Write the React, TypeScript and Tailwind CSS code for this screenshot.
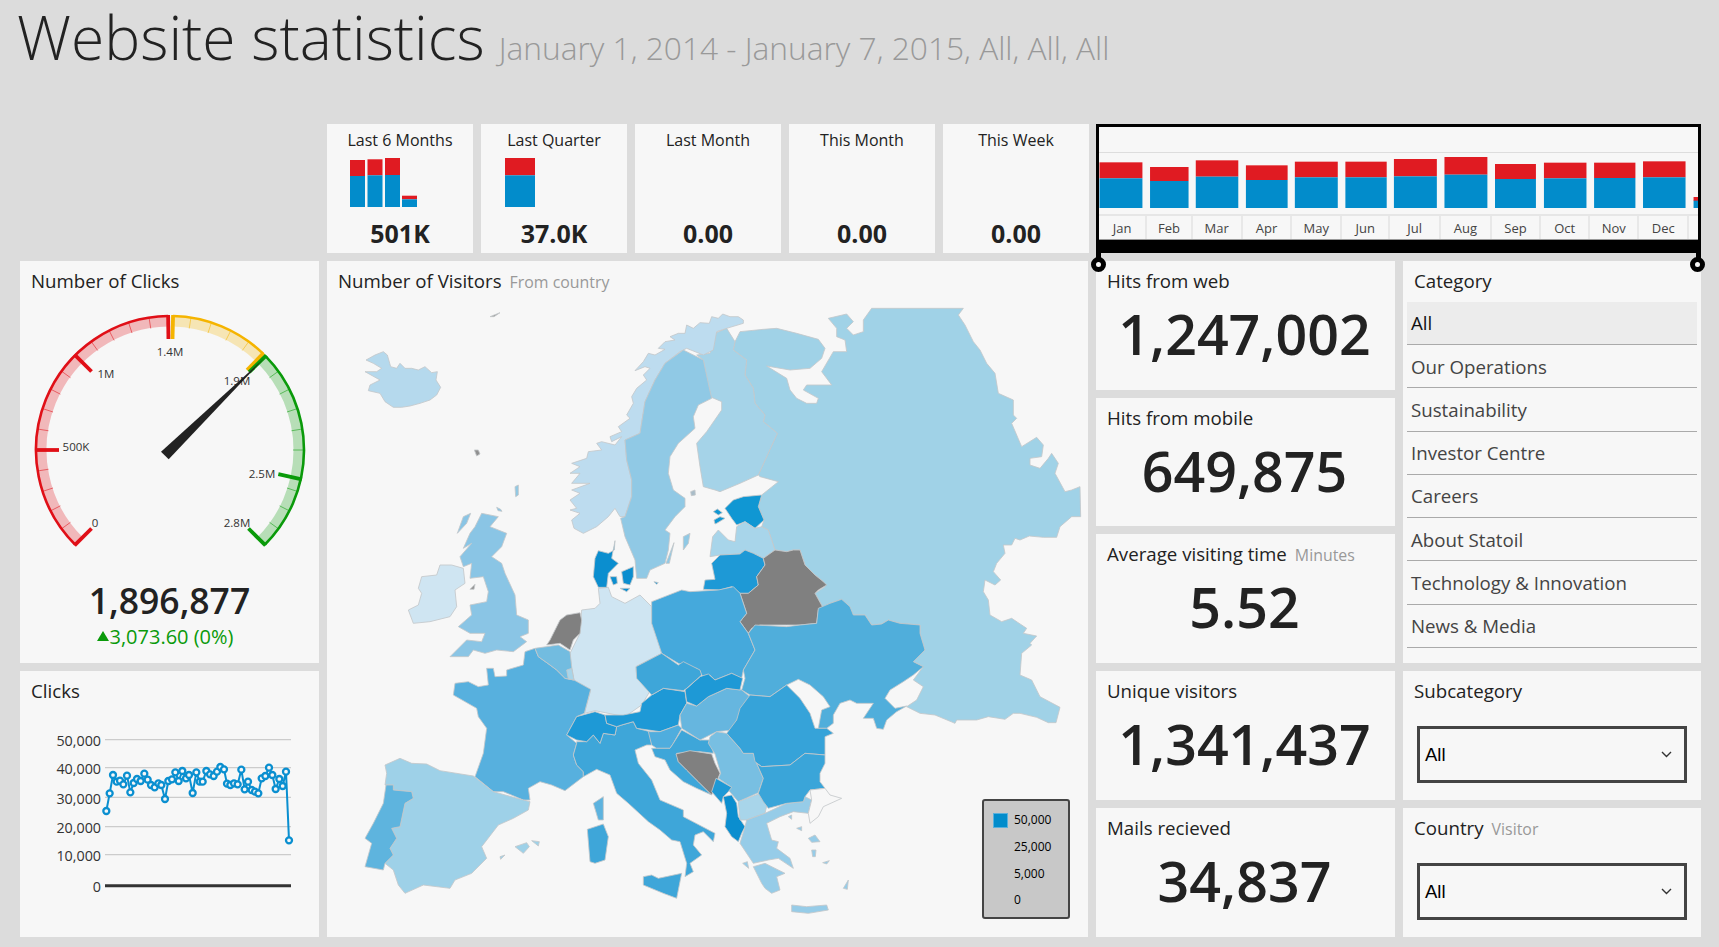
// Website statistics dashboard
const tiles = [
  { label: 'Last 6 Months', value: '501K', bars: [[160, 176], [159.3, 175.3], [158, 175], [195.7, 199.3]], w: 15, x: [23, 40.5, 58, 75] },
  { label: 'Last Quarter', value: '37.0K', bars: [[158, 175.3]], w: 30, x: [24] },
  { label: 'Last Month', value: '0.00', bars: [], w: 0, x: [] },
  { label: 'This Month', value: '0.00', bars: [], w: 0, x: [] },
  { label: 'This Week', value: '0.00', bars: [], w: 0, x: [] },
];

const months = [
  { m: 'Jan', w: 48.4, x0: 24, x1: 131, top: 158, mid: 206 },
  { m: 'Feb', w: 45.3, x0: 150, x1: 246, top: 172, mid: 214 },
  { m: 'Mar', w: 50.1, x0: 264, x1: 370, top: 152, mid: 201 },
  { m: 'Apr', w: 49.4, x0: 389, x1: 493, top: 167, mid: 211 },
  { m: 'May', w: 50.1, x0: 511, x1: 618, top: 156, mid: 203 },
  { m: 'Jun', w: 48.1, x0: 637, x1: 740, top: 156, mid: 203 },
  { m: 'Jul', w: 50.5, x0: 758, x1: 865, top: 148, mid: 200 },
  { m: 'Aug', w: 51, x0: 884, x1: 991, top: 142, mid: 195 },
  { m: 'Sep', w: 49.4, x0: 1010, x1: 1112, top: 163, mid: 208 },
  { m: 'Oct', w: 48.9, x0: 1132, x1: 1238, top: 159, mid: 206 },
  { m: 'Nov', w: 49.3, x0: 1257, x1: 1360, top: 159, mid: 205 },
  { m: 'Dec', w: 49.8, x0: 1379, x1: 1485, top: 155, mid: 203 },
];

const categories = ['All', 'Our Operations', 'Sustainability', 'Investor Centre', 'Careers', 'About Statoil', 'Technology & Innovation', 'News & Media'];

const clickPoints = [
  [274, 438], [284, 385], [294, 330], [305, 350], [315, 347], [325, 358], [336, 332], [346, 382], [356, 354], [366, 342],
  [377, 348], [388, 326], [398, 344], [408, 360], [419, 367], [430, 355], [439, 360], [450, 402], [460, 348], [471, 343],
  [481, 322], [491, 348], [502, 318], [513, 340], [522, 330], [533, 384], [544, 322], [554, 350], [563, 350], [574, 318],
  [585, 328], [596, 333], [606, 320], [616, 306], [627, 313], [636, 356], [646, 360], [657, 355], [668, 358], [679, 314],
  [689, 373], [699, 350], [710, 375], [720, 380], [730, 385], [740, 340], [751, 333], [762, 308], [772, 330], [782, 372],
  [793, 342], [803, 363], [813, 320], [822, 526],
];

// fill, dx, dy, points (3 units = 1px; dx/dy move a crop of the map into place)
const regions: [string, number, number, string][] = [
  ['#a0d2e7', 1020, 0, '135,125 150,95 220,88 260,85 320,100 385,118 405,145 395,175 360,205 300,210 230,198 290,235 300,270 320,295 350,310 380,310 385,295 340,270 350,255 425,255 395,215 430,155 470,155 465,120 440,110 440,85 415,55 470,42 490,65 470,85 490,105 520,95 520,60 545,25 820,25 805,45 825,75 850,125 870,150 890,190 915,220 925,280 970,300 970,345 980,355 965,370 980,405 995,440 1040,412 1060,435 1055,470 1020,475 1020,495 1050,505 1075,475 1085,460 1105,490 1095,520 1125,575 1145,570 1170,560 1172,650 1145,650 1110,680 1100,712 1060,712 1018,708 990,720 975,715 965,735 940,735 945,760 920,790 910,815 932,840 915,855 885,840 880,875 895,900 900,945 935,965 965,955 1010,985 1000,1000 1040,1008 1020,1030 1025,1035 995,1060 990,1125 1025,1140 1050,1190 1110,1222 1098,1268 1075,1268 1040,1252 990,1240 970,1240 945,1258 895,1250 860,1260 800,1260 795,1270 735,1245 690,1240 650,1220 680,1200 700,1160 670,1140 700,1100 670,1085 705,1050 690,1000 690,975 630,970 595,960 575,972 545,975 525,945 490,945 465,915 455,898 420,910 400,925 375,880 405,860 400,845 375,825 345,795 330,750 310,750 290,755 255,750 235,690 215,680 222,660 205,620 215,585 265,545 210,530 205,525 262,400 220,365 225,345 195,310 190,265 165,225 170,180 130,150'],
  ['#a5d3e8', 1020, 0, '110,85 135,125 130,150 170,180 165,225 190,265 195,310 225,345 220,365 262,400 205,525 150,550 90,575 75,570 40,560 30,500 20,430 50,395 95,330 95,305 60,290 40,180 20,165 60,160 75,100'],
  ['#b5d9ed', 0, 0, '48,180 75,165 100,155 112,165 122,200 140,205 150,190 165,205 185,205 205,210 225,200 245,218 262,215 258,240 272,262 260,285 240,300 210,310 180,318 155,322 130,322 105,305 90,280 55,272 60,255 90,240 45,215 80,215 95,205 70,190'],
  ['#bddcef', 0, 0, '1180,60 1165,50 1140,50 1118,42 1105,55 1085,50 1078,70 1050,68 1030,85 1010,75 1005,100 985,100 960,110 975,120 945,125 925,145 945,148 915,165 895,160 880,185 855,212 885,200 900,205 880,225 890,240 860,265 845,290 850,310 830,345 840,355 805,380 815,395 780,410 785,425 815,410 795,435 755,425 740,430 755,450 715,455 710,475 665,490 690,500 660,520 690,520 665,550 720,550 665,570 690,580 660,600 680,625 660,630 690,640 665,660 672,685 700,700 740,680 775,650 795,625 810,650 825,650 845,590 845,540 830,480 825,420 870,400 885,305 915,240 945,190 990,155 1010,145 1060,165 1090,150 1100,95 1130,85 1180,70'],
  ['#90c9e5', 0, 0, '1000,150 1060,180 1075,250 1085,295 1045,315 1030,350 1035,385 985,430 960,470 955,520 970,570 1005,595 1005,620 975,650 945,690 960,700 955,750 945,790 900,810 890,835 860,835 855,780 825,710 812,655 825,650 845,590 845,540 830,480 825,420 870,400 885,305 915,240 945,190'],
  ['#90c9e5', 0, 0, '1000,710 1020,700 1015,730 1000,750'],
  ['#90c9e5', 0, 0, '948,790 972,728 958,790'],
  ['#a8bcc8', 0, 0, '1022,575 1035,570 1036,585 1024,587'],
  ['#8ac5e5', 0, 0, '395,640 445,650 420,680 470,700 455,740 425,770 455,790 465,820 495,885 500,945 535,960 535,1000 510,1010 530,1025 490,1055 440,1050 405,1060 370,1050 355,1070 300,1070 350,1020 395,1025 405,1000 360,1000 325,980 365,945 360,915 410,905 415,875 400,830 360,835 365,790 340,800 330,770 365,730 340,745 360,700 375,680'],
  ['#8ac5e5', 0, 0, '340,650 362,640 350,670 322,700'],
  ['#8ac5e5', 0, 0, '440,622 452,628 456,634 444,632'],
  ['#90c9e5', 0, 0, '495,560 505,555 505,585 497,590'],
  ['#cfe5f2', 0, 0, '270,795 305,795 340,805 345,850 315,870 320,920 300,950 240,965 190,970 175,930 205,915 215,880 205,865 215,830 260,825'],
  ['#909090', 0, 0, '373,450 385,450 390,462 380,468'],
  ['#909090', 0, 0, '420,50 450,38 432,50'],
  ['#909090', 0, 0, '360,868 375,853 372,868'],
  ['#cfe5f2', 0, 0, '745,865 775,862 785,890 825,910 870,885 905,920 908,970 935,1060 858,1100 860,1130 905,1165 875,1215 825,1250 735,1232 703,1240 722,1170 672,1145 665,1110 660,1060 690,1000 695,930 735,925 750,910'],
  ['#0b8ecf', 0, 0, '795,722 793,750 775,760 745,752 735,775 730,830 745,862 770,862 775,820 805,790 785,775'],
  ['#0b8ecf', 0, 0, '780,830 800,830 802,850 790,855'],
  ['#0b8ecf', 0, 0, '815,815 850,800 850,830 840,855 820,850'],
  ['#0b8ecf', 0, 0, '810,865 840,865 830,875'],
  ['#0b8ecf', 0, 0, '912,845 925,848 920,853'],
  ['#1097d3', 1020, 0, '105,625 130,600 160,590 215,585 205,620 222,660 195,685 165,665 140,675 125,655'],
  ['#1097d3', 1020, 0, '70,635 82,627 97,638 85,645'],
  ['#1097d3', 1020, 0, '72,660 90,650 105,655 80,670 75,672'],
  ['#a8d5ea', 1020, 0, '60,770 68,710 85,690 115,720 135,725 140,680 165,665 195,685 215,680 235,690 255,750 220,775 190,760 165,750 150,762 90,765'],
  ['#1e99d6', 1020, 0, '65,790 90,765 150,762 165,750 190,760 220,775 225,795 200,830 205,855 175,880 150,880 125,860 90,870 40,868 45,840 75,838'],
  ['#808080', 1020, 0, '220,775 255,750 290,755 310,750 330,750 345,795 375,825 400,845 410,855 385,870 375,880 400,925 385,930 380,970 330,975 290,975 210,975 185,985 175,1000 150,965 170,940 150,880 175,880 205,855 200,830 225,795'],
  ['#45a9dc', 1020, 0, '-115,905 -25,870 0,875 85,870 130,860 150,880 170,940 150,965 175,1000 195,1050 160,1110 155,1135 125,1120 75,1140 60,1125 40,1130 20,1105 0,1105 -35,1090 -85,1060 -115,970'],
  ['#50aedb', 1020, 900, '175,100 195,75 290,80 330,75 380,70 385,25 420,10 455,-2 480,20 490,45 525,45 545,75 575,72 595,60 630,70 690,75 690,100 705,150 670,185 700,200 670,225 640,245 600,270 585,295 615,325 650,318 620,335 590,360 580,388 560,385 550,355 520,355 550,310 500,310 480,300 450,310 430,345 430,370 410,385 385,385 395,330 420,320 400,290 360,255 325,238 290,255 240,290 180,285 155,270 165,235 160,210 195,150'],
  ['#808080', 0, 900, '630,60 650,45 690,38 695,60 690,100 670,120 660,150 630,130 590,135 600,120'],
  ['#57b0de', 0, 900, '525,155 555,145 565,170 600,195 620,210 645,235 672,240 722,268 703,340 680,350 650,405 680,430 670,465 680,495 700,515 700,530 645,572 605,555 570,545 535,565 540,600 520,600 460,575 430,575 375,530 400,460 410,385 385,350 380,325 310,285 315,250 355,245 385,260 415,255 410,205 430,205 435,230 470,228 470,210 520,195'],
  ['#72bce0', 0, 900, '555,145 625,135 660,155 665,200 672,240 645,235 620,210 600,195 565,170'],
  ['#a8d5ea', 0, 900, '650,210 665,205 672,240 655,237'],
  ['#5db3df', 0, 900, '730,610 760,590 760,660 745,660'],
  ['#3ea6d9', 0, 900, '712,688 760,672 775,710 765,780 735,790 720,785'],
  ['#9ed1e8', 0, 900, '105,495 150,475 185,490 230,492 270,512 370,528 430,575 520,600 540,605 535,630 490,655 445,675 395,740 410,775 365,820 315,840 300,865 220,855 165,880 145,855 130,810 105,790 130,765 120,745 140,715 125,685 150,680 165,610 190,595 185,575 130,570 130,555 105,555 110,520'],
  ['#5eb4de', 0, 900, '108,555 130,555 130,570 185,575 190,595 165,610 150,680 125,685 140,715 120,745 130,765 105,790 100,810 45,800 65,730 45,715 70,670 100,610'],
  ['#9ed1e8', 0, 900, '495,740 530,728 538,740 520,760'],
  ['#9ed1e8', 0, 900, '545,722 568,725 565,738'],
  ['#9ed1e8', 0, 900, '450,770 465,765 452,778'],
  ['#3ea6d9', 0, 900, '680,425 710,425 730,405 750,430 760,400 795,405 800,380 815,375 850,365 860,385 900,395 905,435 890,435 855,450 865,490 905,540 930,600 1000,630 1000,650 1095,700 1090,725 1060,695 1035,705 1030,735 1055,765 1020,790 1030,815 1005,830 1010,790 990,725 965,720 930,690 895,665 835,610 800,580 780,525 740,508 700,530 700,515 680,495 670,465 680,430'],
  ['#3ea6d9', 0, 900, '880,830 905,825 925,835 995,820 980,895 940,880 880,855'],
  ['#1e99d6', 0, 900, '650,405 680,350 735,335 765,345 770,370 800,380 795,405 760,400 750,430 730,405 710,425 680,420'],
  ['#1e99d6', 0, 900, '765,345 820,345 870,335 875,310 905,285 940,265 1005,275 1010,310 990,345 985,375 930,395 860,385 850,365 815,375 800,380 770,370'],
  ['#4fadde', 0, 900, '895,395 930,395 985,375 995,385 970,430 960,445 920,445 905,435'],
  ['#3ea6d9', 0, 900, '970,430 995,390 1050,420 1085,420 1090,460 1050,455 980,460 985,485 1010,510 1045,545 1085,585 1040,565 1000,545 960,510 945,480 915,470 905,445 920,445 960,445'],
  ['#808080', 0, 900, '978,462 1020,452 1085,462 1095,490 1110,520 1085,585 1045,545 1010,510 985,485'],
  ['#66b6df', 0, 900, '990,345 1010,310 1040,318 1075,290 1130,265 1175,270 1200,290 1165,350 1150,390 1100,395 1050,420 995,385'],
  ['#1e99d6', 0, 900, '1005,270 1050,230 1075,222 1095,240 1145,220 1178,235 1170,270 1130,265 1075,290 1040,318 1010,305'],
  ['#3ea6d9', 0, 900, '858,200 935,160 985,195 1000,185 1050,210 1055,225 1010,265 1000,272 940,265 905,285 860,235'],
  ['#78bfe2', 1020, 900, '60,410 80,395 110,400 150,445 160,460 190,460 200,490 220,535 205,578 145,605 115,570 125,562 85,535 92,520 75,462 55,430'],
  ['#1e99d6', 1020, 900, '78,535 125,562 115,575 100,590 95,610 65,575'],
  ['#0b8ecf', 1020, 900, '100,590 125,585 140,610 145,650 165,680 155,700 145,725 125,710 105,680 110,640'],
  ['#a8d5ea', 1020, 900, '145,605 205,582 233,605 225,640 170,660 150,660'],
  ['#96cce8', 1020, 900, '170,660 225,640 290,610 340,605 345,590 365,600 355,640 310,635 270,650 230,670 245,720 265,725 260,745 300,775 310,805 265,775 235,780 190,790 150,730 165,680'],
  ['#96cce8', 1020, 900, '190,800 225,790 265,810 285,820 260,830 270,870 245,880 225,865 215,850'],
  ['#96cce8', 1020, 900, '305,915 350,920 410,915 415,930 355,940 305,935'],
  ['#96cce8', 1020, 900, '355,715 375,705 390,725 365,727'],
  ['#96cce8', 1020, 900, '365,750 378,750 376,770 368,770'],
  ['#96cce8', 1020, 900, '320,685 335,680 335,692'],
  ['#96cce8', 1020, 900, '460,865 475,840 472,868'],
  ['#96cce8', 1020, 900, '158,790 172,785 176,805'],
  ['#96cce8', 1020, 900, '295,650 305,645 305,658'],
  ['#96cce8', 1020, 900, '398,788 418,782 410,792'],
  ['#36a3d9', 1020, 900, '180,285 240,290 290,255 330,295 360,340 375,385 410,385 430,400 405,410 405,465 345,460 300,495 215,500 195,485 190,460 160,460 150,445 110,400 140,360 150,325'],
  ['#3aa5d9', 1020, 900, '200,490 215,500 300,495 345,460 405,465 405,490 390,520 390,545 405,565 360,570 345,590 340,605 290,610 235,625 220,605 205,580 220,535'],
  ['#f7f7f7', 1020, 900, '360,570 405,565 420,585 455,595 400,620 385,650 360,670 355,640 365,600'],
];

function polar(angle: number, r: number) {
  const a = (angle * Math.PI) / 180;
  return [170 + r * Math.sin(a), 450 - r * Math.cos(a)];
}

function arc(a0: number, a1: number, r: number) {
  const [x0, y0] = polar(a0, r);
  const [x1, y1] = polar(a1, r);
  return `M${x0} ${y0}A${r} ${r} 0 ${a1 - a0 > 180 ? 1 : 0} 1 ${x1} ${y1}`;
}

const gaugeBands = [
  { color: '#e00f17', from: -135, to: -0.8, major: [-135, -90, -45, -0.8] },
  { color: '#f5b400', from: 1.3, to: 44, major: [1.3, 44] },
  { color: '#0a9a0a', from: 45.5, to: 135, major: [45.5, 102.6, 135] },
];

const gaugeLabels: [string, number, number][] = [
  ['0', 95, 523], ['500K', 76, 447], ['1M', 106, 374], ['1.4M', 170, 352], ['1.9M', 237, 381], ['2.5M', 262, 474], ['2.8M', 237, 523],
];

function Gauge() {
  return (
    <svg viewBox="20 301 299 279" className="block w-[299px] h-[279px]">
      {gaugeBands.map((b) => {
        const minors: number[] = [];
        for (let a = -126; a < 135; a += 9) {
          if (a > b.from + 3 && a < b.to - 3 && !b.major.some((m) => Math.abs(m - a) < 4)) minors.push(a);
        }
        return (
          <g key={b.color}>
            <path d={arc(b.from, b.to, 128.5)} fill="none" stroke={b.color} strokeOpacity={0.27} strokeWidth={10} />
            <path d={arc(b.from, b.to, 134)} fill="none" stroke={b.color} strokeWidth={2.6} />
            {minors.map((a) => {
              const [x0, y0] = polar(a, 134);
              const [x1, y1] = polar(a, 123);
              return <line key={a} x1={x0} y1={y0} x2={x1} y2={y1} stroke={b.color} strokeOpacity={0.6} strokeWidth={0.9} />;
            })}
            {b.major.map((a) => {
              const [x0, y0] = polar(a, 135);
              const [x1, y1] = polar(a, 111);
              return <line key={a} x1={x0} y1={y0} x2={x1} y2={y1} stroke={b.color} strokeWidth={3.8} />;
            })}
          </g>
        );
      })}
      {gaugeLabels.map(([t, x, y]) => (
        <text key={t} x={x} y={y + 4} textAnchor="middle" fontSize="11.5" fill="#333">{t}</text>
      ))}
      <polygon points="161,451.7 168.7,459.3 264,358.5" fill="#222" />
    </svg>
  );
}

function ClicksChart() {
  const px = (x: number) => 15 + x / 3;
  const py = (y: number) => 665 + y / 3;
  const ticks: [string, number][] = [['50,000', 224], ['40,000', 308], ['30,000', 397], ['20,000', 485], ['10,000', 569]];
  return (
    <svg viewBox="20 711 299 226" className="block w-[299px] h-[226px]">
      {ticks.map(([t, y]) => (
        <g key={t}>
          <line x1={105} x2={291} y1={py(y)} y2={py(y)} stroke="#cccccc" strokeWidth={1.3} />
          <text x={101} y={py(y) + 6.5} textAnchor="end" fontSize="14.3" fill="#333">{t}</text>
        </g>
      ))}
      <line x1={105} x2={291} y1={py(662)} y2={py(662)} stroke="#333" strokeWidth={3} />
      <text x={101} y={py(662) + 6.5} textAnchor="end" fontSize="14.3" fill="#333">0</text>
      <polyline points={clickPoints.map(([x, y]) => `${px(x)},${py(y)}`).join(' ')} fill="none" stroke="#0a8fd0" strokeWidth={2} />
      {clickPoints.map(([x, y]) => (
        <circle key={x} cx={px(x)} cy={py(y)} r={3} fill="#f7f7f7" stroke="#0a8fd0" strokeWidth={2.3} />
      ))}
    </svg>
  );
}

function RangeChart() {
  const px = (x: number) => (x - 24) / 2.493 + 0.5;
  const py = (y: number) => (y - 52) / 3;
  return (
    <div className="relative flex flex-col h-full">
      <div className="flex flex-col flex-1 min-h-0 bg-[#f7f7f7] border-[3px] border-black overflow-hidden">
        <svg viewBox="0 0 599 87" className="block w-full h-[87px] shrink-0">
          <line x1={0} x2={599} y1={25.5} y2={25.5} stroke="#dddddd" strokeWidth={1} />
          {months.map((b) => (
            <g key={b.m}>
              <rect x={px(b.x0)} y={py(b.top)} width={(b.x1 - b.x0) / 2.493} height={py(b.mid) - py(b.top)} fill="#e01b22" />
              <rect x={px(b.x0)} y={py(b.mid)} width={(b.x1 - b.x0) / 2.493} height={py(295) - py(b.mid)} fill="#028ccb" />
            </g>
          ))}
          <rect x={px(1505)} y={py(262)} width={5} height={4} fill="#e01b22" />
          <rect x={px(1505)} y={py(273)} width={5} height={py(295) - py(273)} fill="#028ccb" />
        </svg>
        <div className="flex flex-1 border-t-2 border-[#e6e6e6] border-b border-b-[#999]">
          {months.map((b) => (
            <div key={b.m} style={{ width: b.w }} className="shrink-0 flex items-center justify-center pt-[2px] border-r-2 border-[#e8e8e8] text-[13px] text-[#444]">
              {b.m}
            </div>
          ))}
        </div>
      </div>
      <div className="h-[10px] bg-black shrink-0" />
      <div className="absolute left-0 -bottom-[6px] w-[5px] h-[8px] bg-black z-10" />
      <div className="absolute right-0 -bottom-[6px] w-[5px] h-[8px] bg-black z-10" />
      <div className="absolute -left-[5px] -bottom-[19px] w-[15px] h-[15px] rounded-full border-[5px] border-black bg-[#f7f7f7] z-10" />
      <div className="absolute -right-[4px] -bottom-[19px] w-[15px] h-[15px] rounded-full border-[5px] border-black bg-[#f7f7f7] z-10" />
    </div>
  );
}

function Title({ text, sub }: { text: string; sub?: string }) {
  return (
    <div className="flex items-baseline gap-2 h-10 pt-[7px] pl-[11px] text-[18.7px] leading-[26px] text-[#222] whitespace-nowrap">
      <span>{text}</span>
      {sub ? <span className="text-[15.9px] text-[#999]">{sub}</span> : null}
    </div>
  );
}

function StatCard({ title, sub, value }: { title: string; sub?: string; value: string }) {
  return (
    <div className="bg-[#f7f7f7] flex flex-col">
      <Title text={title} sub={sub} />
      <div className="text-center text-[55.5px] leading-[66px] font-semibold text-[#222] pr-[2px]">{value}</div>
    </div>
  );
}

function Dropdown() {
  return (
    <div className="mx-[14px] mt-[15px] h-[57px] border-[3px] border-[#444] flex items-center justify-between pl-[5px] pr-[12px] text-[18.5px] text-black [font-family:'Liberation_Sans',sans-serif]">
      <span>All</span>
      <svg width="11" height="7" viewBox="0 0 11 7" fill="none" stroke="#333" strokeWidth="1.4">
        <path d="M1 1l4.5 4.5L10 1" />
      </svg>
    </div>
  );
}

export default function App() {
  return (
    <div className="h-[947px] w-[1719px] overflow-hidden bg-[#dcdcdc] [font-family:'Open_Sans',sans-serif]">
      <header className="h-[124px] pl-[17px] flex items-baseline gap-[14px] whitespace-nowrap">
        <h1 className="text-[60.5px] leading-[74px] font-light text-[#222]">Website statistics</h1>
        <span className="text-[31.7px] font-light text-[#999]">January 1, 2014 - January 7, 2015, All, All, All</span>
      </header>

      <div className="ml-5 grid grid-cols-[299px_761px_299px_298px] grid-rows-6 gap-2 h-[813px]">
        {/* Gauge */}
        <div className="col-start-1 row-start-2 row-span-3 bg-[#f7f7f7] flex flex-col items-center">
          <div className="self-stretch"><Title text="Number of Clicks" /></div>
          <Gauge />
          <div className="text-[35.5px] leading-[44px] font-semibold text-[#222] -mt-[2px]">1,896,877</div>
          <div className="text-[20px] leading-[26px] text-[#0a9a0a] flex items-center mr-[8px] mt-[2px]">
            <svg width="12" height="10" viewBox="0 0 12 10" className="mb-[1px]">
              <polygon points="6,0 12,10 0,10" fill="#0a9a0a" />
            </svg>
            3,073.60 (0%)
          </div>
        </div>

        {/* Clicks */}
        <div className="col-start-1 row-start-5 row-span-2 bg-[#f7f7f7]">
          <Title text="Clicks" />
          <ClicksChart />
        </div>

        {/* Period tiles */}
        <div className="col-start-2 row-start-1 flex gap-2">
          {tiles.map((t) => (
            <div key={t.label} className="flex-1 bg-[#f7f7f7] flex flex-col items-center">
              <div className="text-[16px] leading-5 mt-[6px] text-[#222]">{t.label}</div>
              <svg viewBox="0 0 146 60" className="block w-[146px] h-[60px]">
                {t.bars.map(([top, mid], i) => (
                  <g key={i}>
                    <rect x={t.x[i]} y={top - 150} width={t.w} height={mid - top} fill="#e01b22" />
                    <rect x={t.x[i]} y={mid - 150} width={t.w} height={207 - mid} fill="#028ccb" />
                  </g>
                ))}
              </svg>
              <div className="text-[25px] leading-8 mt-[7px] font-bold text-[#222]">{t.value}</div>
            </div>
          ))}
        </div>

        {/* Map */}
        <div className="col-start-2 row-start-2 row-span-5 bg-[#f7f7f7] relative">
          <Title text="Number of Visitors" sub="From country" />
          <svg viewBox="-69 3 2283 1908" className="block w-[761px] h-[636px]">
            {regions.map(([fill, dx, dy, pts], i) => (
              <polygon key={i} points={pts} fill={fill} stroke="#c4c8ca" strokeWidth={2.5} strokeLinejoin="round" transform={`translate(${dx} ${dy})`} />
            ))}
          </svg>
          <div className="absolute left-[655px] top-[538px] w-[88px] h-[120px] bg-[#c8c8c8] border-2 border-[#444] rounded-[3px] text-[12px] text-black">
            <div className="absolute left-[9px] top-[12px] w-[15px] h-[15px] bg-[#028ccb] border border-[#5ab0dc]" />
            <div className="absolute left-[30px] top-[11px] leading-4">50,000</div>
            <div className="absolute left-[30px] top-[38px] leading-4">25,000</div>
            <div className="absolute left-[30px] top-[65px] leading-4">5,000</div>
            <div className="absolute left-[30px] top-[91px] leading-4">0</div>
          </div>
        </div>

        {/* Range selector */}
        <div className="col-start-3 col-span-2 row-start-1">
          <RangeChart />
        </div>

        <div className="col-start-3 row-start-2 grid"><StatCard title="Hits from web" value="1,247,002" /></div>
        <div className="col-start-3 row-start-3 grid"><StatCard title="Hits from mobile" value="649,875" /></div>
        <div className="col-start-3 row-start-4 grid"><StatCard title="Average visiting time" sub="Minutes" value="5.52" /></div>
        <div className="col-start-3 row-start-5 grid"><StatCard title="Unique visitors" value="1,341,437" /></div>
        <div className="col-start-3 row-start-6 grid"><StatCard title="Mails recieved" value="34,837" /></div>

        {/* Category */}
        <div className="col-start-4 row-start-2 row-span-3 bg-[#f7f7f7]">
          <Title text="Category" />
          <ul className="mx-1 mt-[1px]">
            {categories.map((c, i) => (
              <li key={c} className={`h-[43.25px] flex items-center pl-1 pt-[1px] border-b border-[#aaa] text-[18.7px] ${i === 0 ? 'bg-[#ececec] text-[#111]' : 'text-[#444]'}`}>
                {c}
              </li>
            ))}
          </ul>
        </div>

        <div className="col-start-4 row-start-5 bg-[#f7f7f7]">
          <Title text="Subcategory" />
          <Dropdown />
        </div>
        <div className="col-start-4 row-start-6 bg-[#f7f7f7]">
          <Title text="Country" sub="Visitor" />
          <Dropdown />
        </div>
      </div>
    </div>
  );
}
